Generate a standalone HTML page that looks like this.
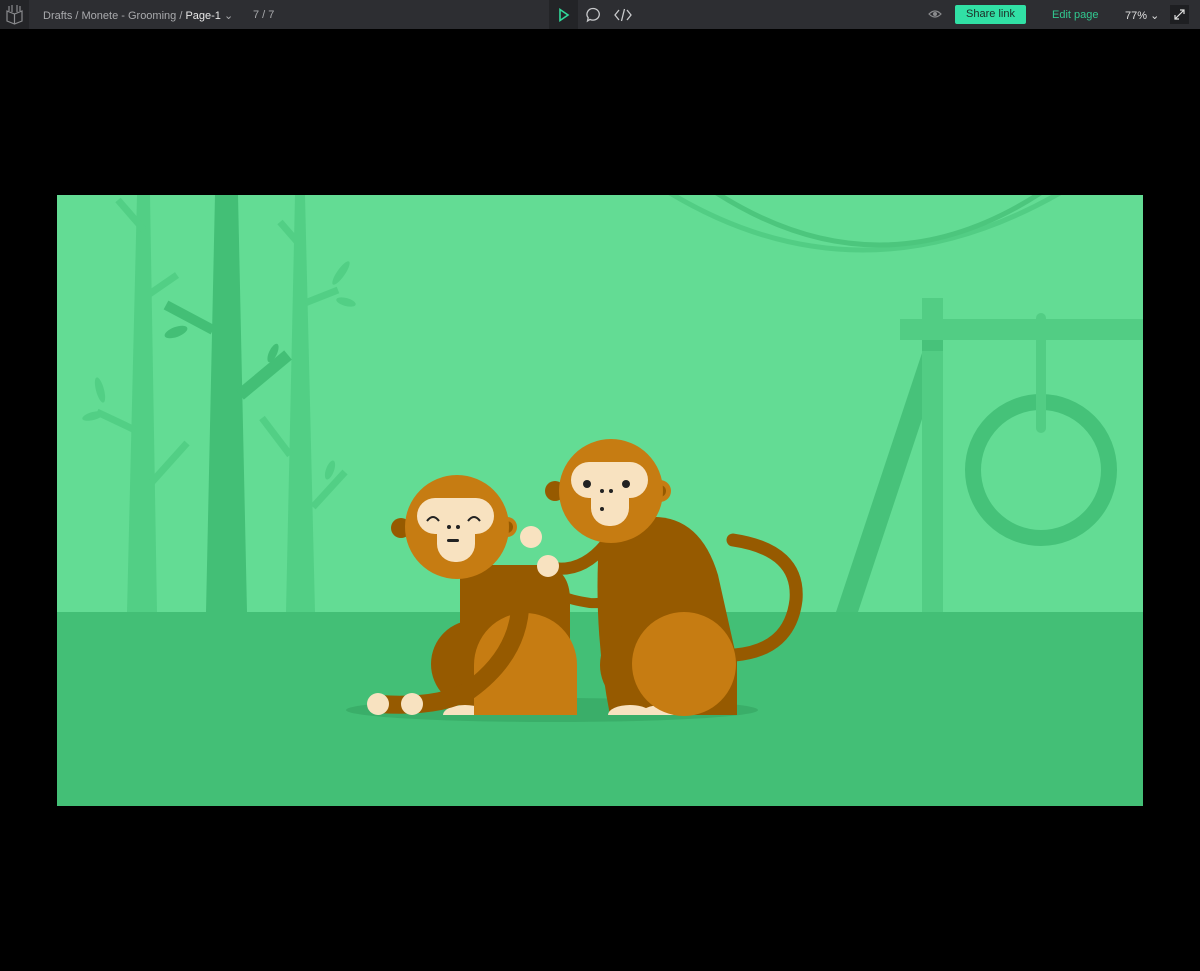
<!DOCTYPE html>
<html><head><meta charset="utf-8"><style>
html,body{margin:0;padding:0;background:#000;width:1200px;height:971px;overflow:hidden;font-family:"Liberation Sans",sans-serif}
.bar{position:absolute;left:0;top:0;width:1200px;height:29px;background:#2d2e32;color:#a9aaad;font-size:11px}
.bar span{position:absolute;top:9px;white-space:nowrap}
</style></head><body>
<div class="bar">
 <div style="position:absolute;left:0;top:0;width:29px;height:29px;background:#242528"></div>
 <svg style="position:absolute;left:5px;top:4px" width="19" height="21" viewBox="0 0 19 21" fill="none" stroke="#8a8b8e" stroke-width="1.2"><path d="M2 7 L9.5 10 L17 7 L17 17 L9.5 20 L2 17 Z M9.5 10 V20 M4 7 V2 M7 8 V1 M12 8 V1 M15 7 V2"/></svg>
 <span style="left:43px">Drafts / Monete - Grooming / <b style="color:#e8e8e8;font-weight:normal">Page-1</b> ⌄</span>
 <span style="left:253px">7 / 7</span>
 <div style="position:absolute;left:549px;top:0;width:29px;height:29px;background:#232427"></div>
 <svg style="position:absolute;left:558px;top:8px" width="12" height="14" viewBox="0 0 12 14"><path d="M2 1.5 L10 7 L2 12.5 Z" fill="none" stroke="#31d89a" stroke-width="1.6"/></svg>
 <svg style="position:absolute;left:585px;top:7px" width="16" height="16" viewBox="0 0 16 16"><path d="M8 1.5a6.3 5.8 0 1 1 -3 10.9 L2.5 14 L3.2 10.8 A6 5.8 0 0 1 8 1.5Z" fill="none" stroke="#c9cacc" stroke-width="1.3"/></svg>
 <svg style="position:absolute;left:614px;top:7px" width="18" height="16" viewBox="0 0 18 16"><path d="M5 3 L1 8 L5 13 M13 3 L17 8 L13 13 M10.5 2 L7.5 14" fill="none" stroke="#c9cacc" stroke-width="1.3"/></svg>
 <svg style="position:absolute;left:928px;top:9px" width="14" height="10" viewBox="0 0 14 10"><path d="M1 5 Q7 -1 13 5 Q7 11 1 5Z" fill="none" stroke="#8a8b8e" stroke-width="1.2"/><circle cx="7" cy="5" r="2" fill="#8a8b8e"/></svg>
 <div style="position:absolute;left:955px;top:5px;width:71px;height:19px;background:#31e0a5;border-radius:2px;color:#1d2a25;font-size:11px;line-height:19px;text-align:center">Share link</div>
 <span style="left:1052px;color:#31c990">Edit page</span>
 <span style="left:1125px;color:#e0e0e0">77% ⌄</span>
 <div style="position:absolute;left:1170px;top:5px;width:19px;height:19px;background:#1e1f22"></div>
 <svg style="position:absolute;left:1174px;top:9px" width="11" height="11" viewBox="0 0 11 11"><path d="M1 10 L10 1 M6 1 H10 V5 M1 6 V10 H5" fill="none" stroke="#e0e0e0" stroke-width="1.2"/></svg>
</div>
<svg style="position:absolute;left:0;top:0" width="1200" height="971" viewBox="0 0 1200 971">
<defs><clipPath id="sc"><rect x="57" y="195" width="1086" height="611"/></clipPath></defs>
<g clip-path="url(#sc)">
<rect x="57" y="195" width="1086" height="611" fill="#63dc94"/>
<path d="M665 190 Q860 310 1065 190" fill="none" stroke="#52cd84" stroke-width="5"/>
<path d="M712 190 Q880 300 1045 190" fill="none" stroke="#4cc67d" stroke-width="5"/>
<g fill="#52cf85">
<path d="M137 195 H150 L157 612 H127 Z"/>
<path d="M295 195 H305 L315 612 H286 Z"/>
</g>
<g stroke="#52cf85" stroke-width="7" fill="none">
<path d="M144 230 L118 200"/><path d="M148 295 L177 275"/><path d="M135 430 L97 412"/><path d="M152 482 L187 443"/>
<path d="M300 245 L280 222"/><path d="M305 303 L338 290"/><path d="M290 455 L262 418"/><path d="M313 507 L345 472"/>
</g>
<g fill="#52cf85">
<ellipse cx="100" cy="390" rx="4" ry="13" transform="rotate(-15 100 390)"/>
<ellipse cx="93" cy="416" rx="11" ry="4" transform="rotate(-15 93 416)"/>
<ellipse cx="341" cy="273" rx="4" ry="14" transform="rotate(35 341 273)"/>
<ellipse cx="346" cy="302" rx="10" ry="4" transform="rotate(15 346 302)"/>
<ellipse cx="330" cy="470" rx="4" ry="10" transform="rotate(20 330 470)"/>
</g>
<path d="M215 195 H238 L247 612 H206 Z" fill="#43bf76"/>
<path d="M213 330 L166 305" stroke="#43bf76" stroke-width="10"/>
<path d="M240 395 L288 355" stroke="#43bf76" stroke-width="12"/>
<ellipse cx="176" cy="332" rx="12" ry="5" transform="rotate(-20 176 332)" fill="#43bf76"/>
<ellipse cx="273" cy="353" rx="4" ry="10" transform="rotate(25 273 353)" fill="#43bf76"/>
<path d="M922 353 L836 612 H858 L925 410Z" fill="#47c27a"/>
<rect x="922" y="298" width="21" height="314" fill="#52cd84"/>
<rect x="900" y="319" width="243" height="21" fill="#52cd84"/>
<rect x="922" y="340" width="21" height="11" fill="#47c27a"/>
<circle cx="1041" cy="470" r="68" fill="none" stroke="#45c279" stroke-width="16"/>
<path d="M1041 318 V428" stroke="#52cd84" stroke-width="10" stroke-linecap="round"/>
<rect x="57" y="612" width="1086" height="194" fill="#43bf76"/>
<ellipse cx="552" cy="710" rx="206" ry="12" fill="#3aae69"/>
<path d="M733 540 Q800 550 796 600 Q790 650 735 655" fill="none" stroke="#965a00" stroke-width="13" stroke-linecap="round"/>
<!-- monkey 1 -->
<path d="M460 565 H545 Q570 570 570 600 V715 H460Z" fill="#965a00"/>
<circle cx="475" cy="664" r="44" fill="#965a00"/>
<path d="M443 715 A22 10 0 0 1 487 715Z M483 715 A22 10 0 0 1 527 715Z" fill="#f8e2c0"/>
<path d="M525 613 A52 52 0 0 1 577 665 V715 H474 V665 A51 52 0 0 1 525 613Z" fill="#c67c12"/>
<path d="M520 590 Q525 650 470 690 Q440 708 378 704" fill="none" stroke="#965a00" stroke-width="18" stroke-linecap="round"/>
<circle cx="378" cy="704" r="11" fill="#f8e2c0"/>
<circle cx="412" cy="704" r="11" fill="#f8e2c0"/>
<!-- monkey 2 -->
<path d="M598 560 Q600 520 650 517 Q700 515 718 575 L737 660 L737 715 H610 Q595 640 598 560Z" fill="#965a00"/>
<circle cx="645" cy="665" r="45" fill="#965a00"/>
<path d="M608 715 A22 10 0 0 1 652 715Z M640 715 A22 10 0 0 1 684 715Z" fill="#f8e2c0"/>
<circle cx="684" cy="664" r="52" fill="#c67c12"/>
<path d="M605 545 Q580 575 548 567" fill="none" stroke="#965a00" stroke-width="12" stroke-linecap="round"/>
<path d="M612 580 Q620 605 590 603 Q570 600 560 595" fill="none" stroke="#965a00" stroke-width="10" stroke-linecap="round"/>
<circle cx="531" cy="537" r="11" fill="#f8e2c0"/>
<circle cx="548" cy="566" r="11" fill="#f8e2c0"/>
<circle cx="401" cy="528" r="10" fill="#965a00"/>
<circle cx="507" cy="527" r="10" fill="#c67c12"/><circle cx="507" cy="527" r="6" fill="#965a00"/>
<circle cx="457" cy="527" r="52" fill="#c67c12"/>
<rect x="417" y="498" width="77" height="36" rx="18" fill="#f8e2c0"/>
<rect x="437" y="515" width="38" height="47" rx="18" fill="#f8e2c0"/>
<path d="M427 521 Q433 513 439 521 M468 521 Q474 513 480 521" fill="none" stroke="#222" stroke-width="2"/>
<circle cx="449" cy="527" r="2" fill="#222"/><circle cx="458" cy="527" r="2" fill="#222"/>
<rect x="447" y="539" width="12" height="3" rx="1.5" fill="#222"/>
<circle cx="555" cy="491" r="10" fill="#965a00"/>
<circle cx="660" cy="491" r="11" fill="#c67c12"/><circle cx="660" cy="491" r="6" fill="#965a00"/>
<circle cx="611" cy="491" r="52" fill="#c67c12"/>
<rect x="571" y="462" width="77" height="36" rx="18" fill="#f8e2c0"/>
<rect x="591" y="480" width="38" height="46" rx="18" fill="#f8e2c0"/>
<circle cx="587" cy="484" r="4" fill="#222"/><circle cx="626" cy="484" r="4" fill="#222"/>
<circle cx="602" cy="491" r="2" fill="#222"/><circle cx="611" cy="491" r="2" fill="#222"/>
<circle cx="602" cy="509" r="2" fill="#222"/>
</g>
</svg>
</body></html>
